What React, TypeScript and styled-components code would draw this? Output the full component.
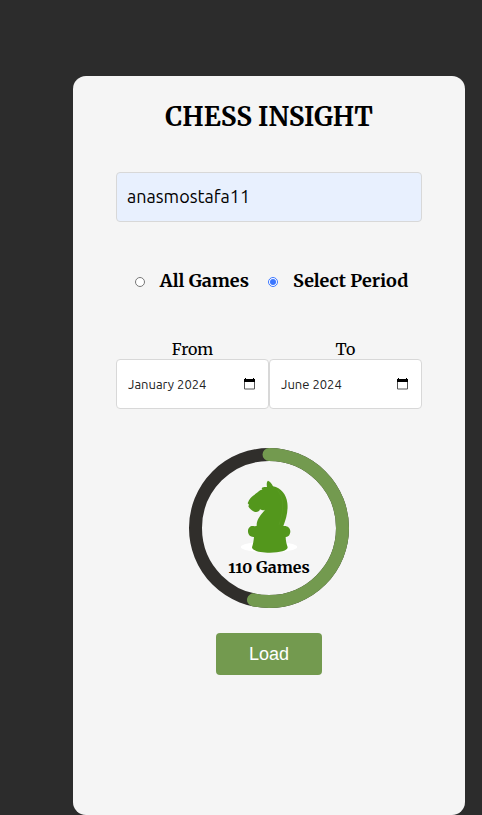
import React, { useState } from "react";
import styled, { createGlobalStyle } from "styled-components";

const serif = `"Merriweather", "DejaVu Serif Condensed", "DejaVu Serif", serif`;
const sans = `"Ubuntu", "Noto Sans", sans-serif`;

const GlobalStyle = createGlobalStyle`
  *, *::before, *::after { box-sizing: border-box; }
  body {
    margin: 0;
    background: #2c2c2c;
    color: #000;
    font-family: ${serif};
  }
`;

const Page = styled.main`
  display: flex;
  min-height: 100vh;
  padding: 76px 17px 0 73px;
`;

const Card = styled.form`
  flex: 1;
  display: flex;
  flex-direction: column;
  align-items: center;
  padding: 20px 43px 40px;
  border-radius: 13px;
  background: #f5f5f5;
`;

const Title = styled.h1`
  margin: 0 0 34px;
  font-size: 26px;
  line-height: 42px;
  font-weight: 700;
  white-space: nowrap;
`;

const Field = styled.input`
  width: 100%;
  height: 50px;
  padding: 10px 10px 12px;
  border: 1px solid #d8d8d8;
  border-radius: 4px;
  background: #e8f0fe;
  color: #000;
  font-family: ${sans};
  font-size: 18px;
`;

const Modes = styled.fieldset`
  display: flex;
  gap: 19px;
  margin: 44px 0 0;
  padding: 0 0 0 5px;
  border: 0;
`;

const Mode = styled.label`
  display: flex;
  align-items: center;
  gap: 15px;
  font-size: 18px;
  line-height: 30px;
  font-weight: 700;
  white-space: nowrap;
`;

const Radio = styled.input`
  width: 10px;
  height: 10px;
  margin: 2px 0 0;
  accent-color: #3b76ff;
`;

const Period = styled.div`
  display: grid;
  grid-template-columns: 1fr 1fr;
  width: 100%;
  margin-top: 43px;
`;

const Bound = styled.label`
  display: flex;
  flex-direction: column;
  align-items: center;
  min-width: 0;
  font-size: 16px;
  line-height: 20px;
`;

const MonthBox = styled.span`
  display: flex;
  align-items: center;
  width: 100%;
  height: 50px;
  padding: 0 13px 0 11px;
  border: 1px solid #d8d8d8;
  border-radius: 4px;
  background: #fff;
`;

const MonthText = styled.input`
  flex: 1;
  min-width: 0;
  padding: 0;
  border: 0;
  outline: 0;
  background: transparent;
  color: #222;
  font-family: ${sans};
  font-size: 13px;
`;

const CalendarIcon = styled.svg`
  flex: none;
  display: block;
  width: 12px;
  height: 12px;
`;

const Progress = styled.div`
  display: grid;
  place-items: center;
  margin-top: 39px;

  & > * {
    grid-area: 1 / 1;
  }
`;

const Ring = styled.svg`
  display: block;
  width: 160px;
  height: 160px;
`;

const Status = styled.div`
  display: flex;
  flex-direction: column;
  align-items: center;
  padding-bottom: 2px;
`;

const Knight = styled.svg`
  display: block;
  width: 70px;
  height: 80px;
`;

const Count = styled.output`
  font-size: 16px;
  line-height: 24px;
  font-weight: 700;
  font-variant-numeric: oldstyle-nums;
`;

const LoadButton = styled.button`
  width: 106px;
  height: 42px;
  margin-top: 25px;
  border: 0;
  border-radius: 4px;
  background: #739a4f;
  color: #fff;
  font-family: "Liberation Sans", Arial, sans-serif;
  font-size: 18px;
  cursor: pointer;
`;

const KnightPiece = () => (
  <Knight viewBox="-3 0 210 240" aria-hidden="true">
    <ellipse cx="102" cy="216" rx="85" ry="16" fill="#fff" />
    <path
      fill="#53971c"
      d="M96 36 C94 26 96 18 99 17 C104 18 111 26 114 34 C138 39 154 58 157 84 C160 108 153 133 145 153 C156 151 166 158 166 169 C166 180 159 187 152 186 C152 197 155 208 158 217 C158 227 134 233 105 233 C76 233 51 227 51 217 C54 208 56 197 57 186 C47 187 39 180 39 169 C39 157 48 151 58 154 L65 153 C64 132 77 121 90 104 C83 107 78 105 75 103 C73 110 65 113 58 110 C50 106 43 101 40 94 L42 89 L38 85 C40 82 40 79 42 76 C48 64 60 59 68 52 C74 47 78 43 82 45 L80 39 C85 35 91 36 96 36 Z"
    />
    <path
      d="M128 46 C146 68 149 98 132 150"
      fill="none"
      stroke="#5a9d24"
      strokeWidth="2"
    />
  </Knight>
);

const RADIUS = 73.5;

const ProgressRing = ({ share }: { share: number }) => (
  <Ring viewBox="0 0 160 160" aria-hidden="true">
    <circle cx="80" cy="80" r={RADIUS} fill="none" stroke="#302e2b" strokeWidth="13" />
    <circle
      cx="80"
      cy="80"
      r={RADIUS}
      fill="none"
      stroke="#739a4f"
      strokeWidth="13"
      strokeLinecap="round"
      pathLength="100"
      strokeDasharray={`${share} 100`}
      transform="rotate(-90 80 80)"
    />
  </Ring>
);

type MonthFieldProps = {
  label: string;
  value: string;
  onChange: (value: string) => void;
};

const MonthField = ({ label, value, onChange }: MonthFieldProps) => (
  <Bound>
    {label}
    <MonthBox>
      <MonthText type="text" value={value} onChange={(e) => onChange(e.target.value)} />
      <CalendarIcon viewBox="0 0 12 12" aria-hidden="true">
        <path d="M1.5 3.5h10v7.5h-10z" fill="none" stroke="#555" />
        <path d="M2 0h1v1h7V0h1v1h1v3H1V1h1z" fill="#000" />
      </CalendarIcon>
    </MonthBox>
  </Bound>
);

export default function App() {
  const [username, setUsername] = useState("anasmostafa11");
  const [mode, setMode] = useState("period");
  const [from, setFrom] = useState("January 2024");
  const [to, setTo] = useState("June 2024");

  return (
    <>
      <GlobalStyle />
      <Page>
        <Card onSubmit={(e) => e.preventDefault()}>
          <Title>CHESS INSIGHT</Title>
          <Field
            type="text"
            aria-label="Username"
            spellCheck={false}
            value={username}
            onChange={(e) => setUsername(e.target.value)}
          />
          <Modes aria-label="Games to load">
            <Mode>
              <Radio
                type="radio"
                name="mode"
                checked={mode === "all"}
                onChange={() => setMode("all")}
              />
              All Games
            </Mode>
            <Mode>
              <Radio
                type="radio"
                name="mode"
                checked={mode === "period"}
                onChange={() => setMode("period")}
              />
              Select Period
            </Mode>
          </Modes>
          {mode === "period" && (
            <Period>
              <MonthField label="From" value={from} onChange={setFrom} />
              <MonthField label="To" value={to} onChange={setTo} />
            </Period>
          )}
          <Progress>
            <ProgressRing share={53.4} />
            <Status>
              <KnightPiece />
              <Count>110 Games</Count>
            </Status>
          </Progress>
          <LoadButton type="submit">Load</LoadButton>
        </Card>
      </Page>
    </>
  );
}
